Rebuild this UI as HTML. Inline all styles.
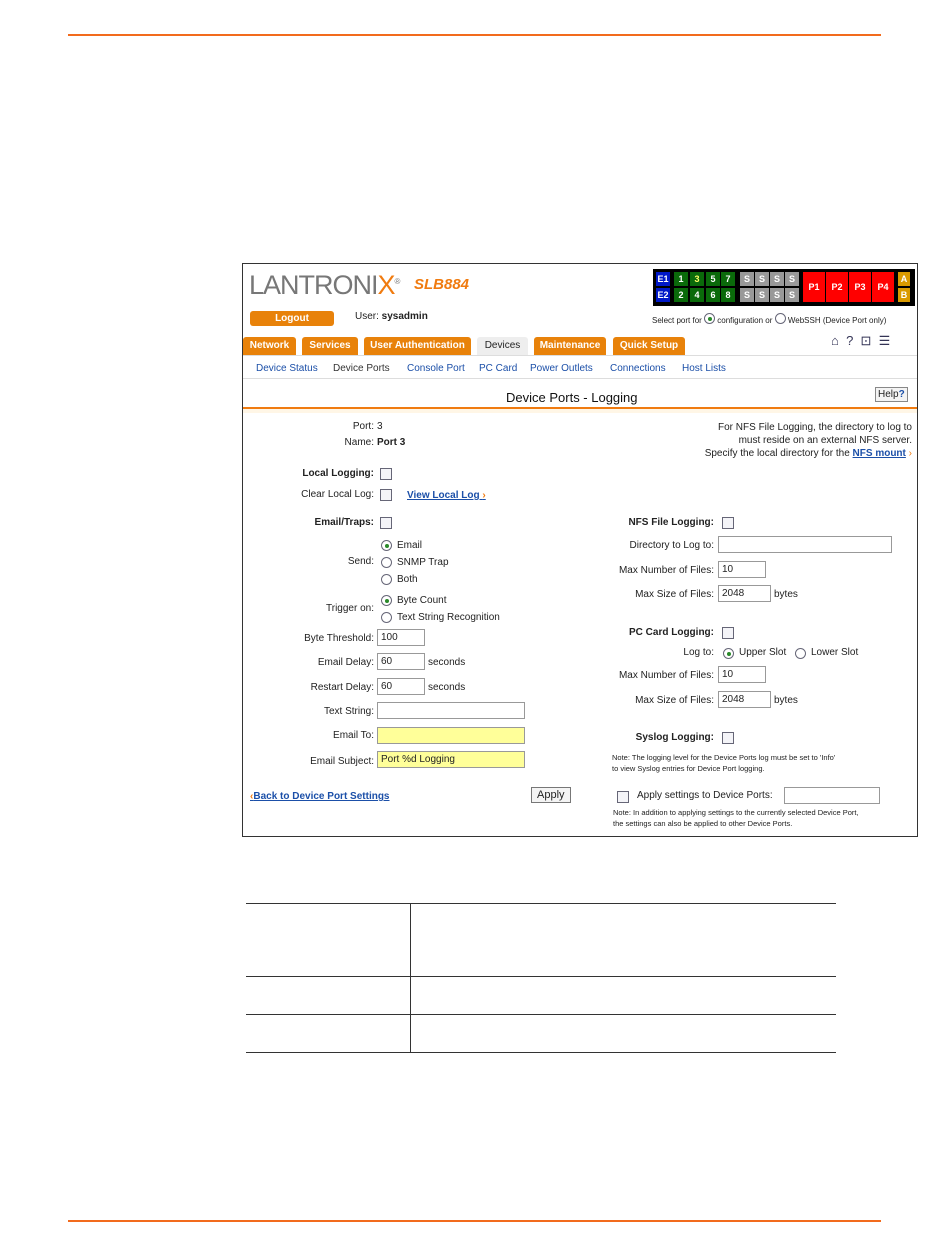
<!DOCTYPE html>
<html><head><style>
body{margin:0;width:950px;height:1260px;background:#fff;position:relative;font-family:"Liberation Sans",sans-serif;font-size:10px;color:#222;overflow:hidden}
.a{position:absolute;white-space:nowrap}
.r{text-align:right}
.cb{position:absolute;width:10px;height:10px;border:1px solid #667;background:#f4f4f8}
.rd{position:absolute;width:9px;height:9px;border:1px solid #667;border-radius:50%;background:#fff}
.rd.on::after{content:"";position:absolute;left:2.5px;top:2.5px;width:4px;height:4px;border-radius:50%;background:#2a8a2a}
.in{position:absolute;border:1px solid #999;background:#fff;height:17px;box-sizing:border-box;padding:2px 3px;font-size:10px}
.y{background:#ffff99}
.lk{color:#1b4fa8;font-weight:bold}
.tab{position:absolute;top:337px;height:18px;background:#e8820a;color:#fff;font-weight:bold;font-size:10px;line-height:18px;text-align:center;border-radius:3px 3px 0 0}
.sq{position:absolute;width:14px;height:14px;font-size:9px;font-weight:bold;color:#fff;text-align:center;line-height:14px}
.nv{position:absolute;top:363px;color:#1b4fa8;white-space:nowrap}
</style></head><body>
<div class="a" style="left:68px;top:34px;width:813px;height:2px;background:#f26b1d"></div>
<div class="a" style="left:68px;top:1220px;width:813px;height:2px;background:#f26b1d"></div>

<div class="a" style="left:242px;top:263px;width:674px;height:572px;border:1px solid #333"></div>
<div class="a" style="left:249px;top:270px;font-size:27px;color:#777;letter-spacing:-1px">LANTRONI<span style="color:#f07b10">X</span><sup style="font-size:8px">®</sup></div>
<div class="a" style="left:414px;top:276px;font-size:15px;color:#f07b10;font-weight:bold;font-style:italic">SLB884</div>
<div class="a" style="left:250px;top:311px;width:84px;height:15px;background:#e8820a;border-radius:3px;color:#fff;font-weight:bold;text-align:center;line-height:15px">Logout</div>
<div class="a" style="left:355px;top:311px">User: <b>sysadmin</b></div>
<div class="a" style="left:653px;top:269px;width:262px;height:37px;background:#000"></div>
<div class="sq" style="left:656px;top:272px;background:#0018c8">E1</div><div class="sq" style="left:656px;top:288px;background:#0018c8">E2</div>
<div class="sq" style="left:674px;top:272px;background:#0a6a0a">1</div><div class="sq" style="left:690px;top:272px;background:#0a6a0a;color:#ff6">3</div><div class="sq" style="left:706px;top:272px;background:#0a6a0a">5</div><div class="sq" style="left:721px;top:272px;background:#0a6a0a">7</div>
<div class="sq" style="left:674px;top:288px;background:#0a6a0a">2</div><div class="sq" style="left:690px;top:288px;background:#0a6a0a">4</div><div class="sq" style="left:706px;top:288px;background:#0a6a0a">6</div><div class="sq" style="left:721px;top:288px;background:#0a6a0a">8</div>
<div class="sq" style="left:740px;top:272px;background:#999">S</div><div class="sq" style="left:755px;top:272px;background:#999">S</div><div class="sq" style="left:770px;top:272px;background:#999">S</div><div class="sq" style="left:785px;top:272px;background:#999">S</div>
<div class="sq" style="left:740px;top:288px;background:#999">S</div><div class="sq" style="left:755px;top:288px;background:#999">S</div><div class="sq" style="left:770px;top:288px;background:#999">S</div><div class="sq" style="left:785px;top:288px;background:#999">S</div>
<div class="sq" style="left:803px;top:272px;width:22px;height:30px;line-height:30px;background:#f00">P1</div><div class="sq" style="left:826px;top:272px;width:22px;height:30px;line-height:30px;background:#f00">P2</div><div class="sq" style="left:849px;top:272px;width:22px;height:30px;line-height:30px;background:#f00">P3</div><div class="sq" style="left:872px;top:272px;width:22px;height:30px;line-height:30px;background:#f00">P4</div>
<div class="sq" style="left:898px;top:272px;width:12px;background:#d99a00">A</div><div class="sq" style="left:898px;top:288px;width:12px;background:#d99a00">B</div>
<div class="a" style="left:652px;top:312px;font-size:8px">Select port for <span class="rd on" style="position:relative;display:inline-block;top:1px"></span> configuration or <span class="rd" style="position:relative;display:inline-block;top:1px"></span> WebSSH (Device Port only)</div>

<div class="tab" style="left:243px;width:53px">Network</div>
<div class="tab" style="left:302px;width:56px">Services</div>
<div class="tab" style="left:364px;width:107px">User Authentication</div>
<div class="tab" style="left:477px;width:51px;background:#eee;color:#222;font-weight:normal">Devices</div>
<div class="tab" style="left:534px;width:72px">Maintenance</div>
<div class="tab" style="left:613px;width:72px">Quick Setup</div>
<div class="a" style="left:243px;top:355px;width:674px;height:1px;background:#ddd"></div>
<div class="a" style="left:831px;top:333px;font-size:13px;color:#335">⌂&nbsp; ?&nbsp; ⊡&nbsp; ☰</div>
<div class="nv" style="left:256px">Device Status</div>
<div class="nv" style="left:333px;color:#333">Device Ports</div>
<div class="nv" style="left:407px">Console Port</div>
<div class="nv" style="left:479px">PC Card</div>
<div class="nv" style="left:530px">Power Outlets</div>
<div class="nv" style="left:610px">Connections</div>
<div class="nv" style="left:682px">Host Lists</div>
<div class="a" style="left:243px;top:378px;width:674px;height:1px;background:#ddd"></div>
<div class="a" style="left:506px;top:390px;font-size:13px;color:#111">Device Ports - Logging</div>
<div class="a" style="left:875px;top:387px;border:1px solid #888;padding:1px 2px;background:#f4f4f4">Help<b style="color:#1b4fa8">?</b></div>
<div class="a" style="left:243px;top:407px;width:674px;height:2px;background:#f07b10"></div>
<div class="a" style="left:243px;top:409px;width:674px;height:4px;background:#fff6e6"></div>

<div class="a r" style="right:576px;top:421px">Port:</div><div class="a" style="left:377px;top:421px">3</div>
<div class="a r" style="right:576px;top:437px">Name:</div><div class="a" style="left:377px;top:437px"><b>Port 3</b></div>
<div class="a r" style="right:38px;top:421px;line-height:13px">For NFS File Logging, the directory to log to<br>must reside on an external NFS server.<br>Specify the local directory for the <span class="lk" style="text-decoration:underline">NFS mount</span> <span style="color:#f07b10">›</span></div>
<div class="a r" style="right:576px;top:468px;font-weight:bold">Local Logging:</div><div class="cb" style="left:380px;top:468px"></div>
<div class="a r" style="right:576px;top:489px">Clear Local Log:</div><div class="cb" style="left:380px;top:489px"></div>
<div class="a lk" style="left:407px;top:490px;text-decoration:underline">View Local Log <span style="color:#f07b10">›</span></div>
<div class="a r" style="right:576px;top:517px;font-weight:bold">Email/Traps:</div><div class="cb" style="left:380px;top:517px"></div>
<div class="rd on" style="left:381px;top:540px"></div><div class="a" style="left:397px;top:540px">Email</div>
<div class="a r" style="right:576px;top:556px">Send:</div>
<div class="rd" style="left:381px;top:557px"></div><div class="a" style="left:397px;top:557px">SNMP Trap</div>
<div class="rd" style="left:381px;top:574px"></div><div class="a" style="left:397px;top:574px">Both</div>
<div class="rd on" style="left:381px;top:595px"></div><div class="a" style="left:397px;top:595px">Byte Count</div>
<div class="a r" style="right:576px;top:603px">Trigger on:</div>
<div class="rd" style="left:381px;top:612px"></div><div class="a" style="left:397px;top:612px">Text String Recognition</div>
<div class="a r" style="right:576px;top:633px">Byte Threshold:</div><div class="in" style="left:377px;top:629px;width:48px">100</div>
<div class="a r" style="right:576px;top:657px">Email Delay:</div><div class="in" style="left:377px;top:653px;width:48px">60</div><div class="a" style="left:428px;top:657px">seconds</div>
<div class="a r" style="right:576px;top:682px">Restart Delay:</div><div class="in" style="left:377px;top:678px;width:48px">60</div><div class="a" style="left:428px;top:682px">seconds</div>
<div class="a r" style="right:576px;top:706px">Text String:</div><div class="in" style="left:377px;top:702px;width:148px"></div>
<div class="a r" style="right:576px;top:730px">Email To:</div><div class="in y" style="left:377px;top:727px;width:148px"></div>
<div class="a r" style="right:576px;top:756px">Email Subject:</div><div class="in y" style="left:377px;top:751px;width:148px">Port %d Logging</div>
<div class="a lk" style="left:250px;top:791px;text-decoration:underline"><span style="color:#f07b10">‹</span>Back to Device Port Settings</div>
<div class="a" style="left:531px;top:787px;border:1px solid #777;padding:1px 5px;background:#f4f4f4;font-size:11px">Apply</div>

<div class="a r" style="right:236px;top:517px;font-weight:bold">NFS File Logging:</div><div class="cb" style="left:722px;top:517px"></div>
<div class="a r" style="right:236px;top:540px">Directory to Log to:</div><div class="in" style="left:718px;top:536px;width:174px"></div>
<div class="a r" style="right:236px;top:565px">Max Number of Files:</div><div class="in" style="left:718px;top:561px;width:48px">10</div>
<div class="a r" style="right:236px;top:589px">Max Size of Files:</div><div class="in" style="left:718px;top:585px;width:53px">2048</div><div class="a" style="left:774px;top:589px">bytes</div>
<div class="a r" style="right:236px;top:627px;font-weight:bold">PC Card Logging:</div><div class="cb" style="left:722px;top:627px"></div>
<div class="a r" style="right:236px;top:647px">Log to:</div>
<div class="rd on" style="left:723px;top:648px"></div><div class="a" style="left:739px;top:647px">Upper Slot</div>
<div class="rd" style="left:795px;top:648px"></div><div class="a" style="left:811px;top:647px">Lower Slot</div>
<div class="a r" style="right:236px;top:670px">Max Number of Files:</div><div class="in" style="left:718px;top:666px;width:48px">10</div>
<div class="a r" style="right:236px;top:695px">Max Size of Files:</div><div class="in" style="left:718px;top:691px;width:53px">2048</div><div class="a" style="left:774px;top:695px">bytes</div>
<div class="a r" style="right:236px;top:732px;font-weight:bold">Syslog Logging:</div><div class="cb" style="left:722px;top:732px"></div>
<div class="a" style="left:612px;top:752px;font-size:7.5px;line-height:11px">Note: The logging level for the Device Ports log must be set to 'Info'<br>to view Syslog entries for Device Port logging.</div>
<div class="cb" style="left:617px;top:791px"></div><div class="a" style="left:637px;top:790px">Apply settings to Device Ports:</div>
<div class="in" style="left:784px;top:787px;width:96px"></div>
<div class="a" style="left:613px;top:807px;font-size:7.5px;line-height:11px">Note: In addition to applying settings to the currently selected Device Port,<br>the settings can also be applied to other Device Ports.</div>

<div class="a" style="left:246px;top:903px;width:590px;height:1px;background:#333"></div>
<div class="a" style="left:246px;top:976px;width:590px;height:1px;background:#333"></div>
<div class="a" style="left:246px;top:1014px;width:590px;height:1px;background:#333"></div>
<div class="a" style="left:246px;top:1052px;width:590px;height:1px;background:#333"></div>
<div class="a" style="left:410px;top:903px;width:1px;height:150px;background:#333"></div>
</body></html>
